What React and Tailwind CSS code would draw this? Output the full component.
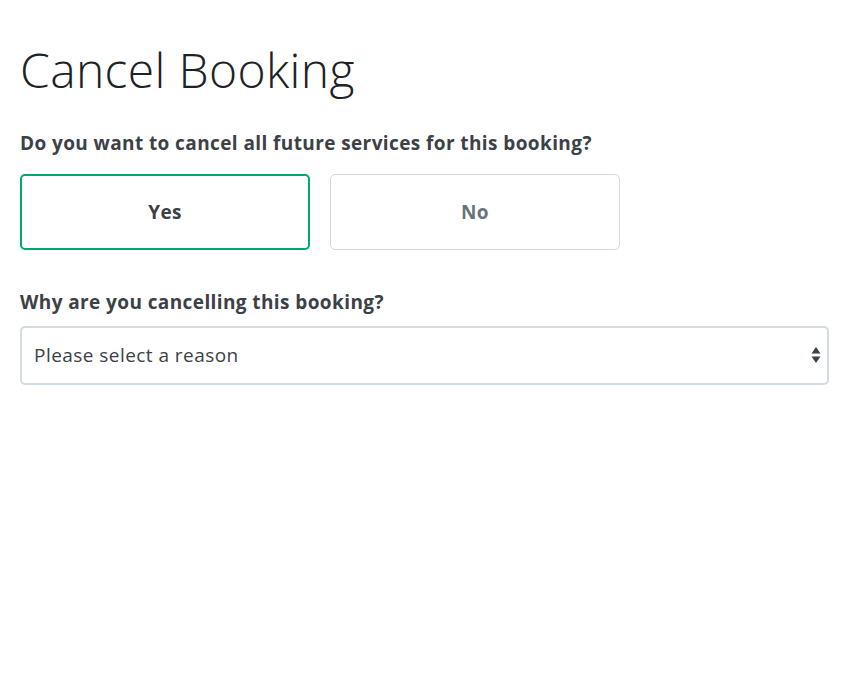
export default function App() {
  return (
    <div className="min-h-screen bg-white pl-[20px] pr-[18px] pt-[40px] text-[#3b4147]" style={{ fontFamily: '"Open Sans", "Noto Sans", sans-serif' }}>
      <h1 className="text-[48px] font-light leading-[60px] tracking-[0.35px] text-[#1d2226]">Cancel Booking</h1>

      <div className="mt-[31px] text-[19px] font-bold leading-[24px] tracking-[0.4px]">
        Do you want to cancel all future services for this booking?
      </div>
      <div className="mt-[19px] flex gap-[20px]">
        <button
          type="button"
          className="flex h-[76px] w-[290px] items-center justify-center rounded-[5px] border-2 border-[#00a870] bg-white text-[19px] font-bold tracking-[0.4px] text-[#3b4147]"
        >
          Yes
        </button>
        <button
          type="button"
          className="flex h-[76px] w-[290px] items-center justify-center rounded-[5px] border border-[#d3d9de] bg-white text-[19px] font-bold tracking-[0.4px] text-[#67737c]"
        >
          No
        </button>
      </div>

      <div className="mt-[40px] text-[19px] font-bold leading-[24px] tracking-[0.4px]">Why are you cancelling this booking?</div>
      <div className="relative mt-[12px]">
        <select className="h-[59px] w-full appearance-none rounded-[5px] border-2 border-[#d3dbe2] bg-white pl-[12px] text-[19px] tracking-[0.45px] text-[#3b4147] outline-none">
          <option>Please select a reason</option>
        </select>
        <svg className="pointer-events-none absolute right-[8px] top-[20px]" width="10" height="18" viewBox="0 0 10 18">
          <path d="M5 1 L9.5 7.5 L0.5 7.5 Z" fill="#3b4147" />
          <path d="M5 17 L9.5 10.5 L0.5 10.5 Z" fill="#3b4147" />
        </svg>
      </div>
    </div>
  );
}
